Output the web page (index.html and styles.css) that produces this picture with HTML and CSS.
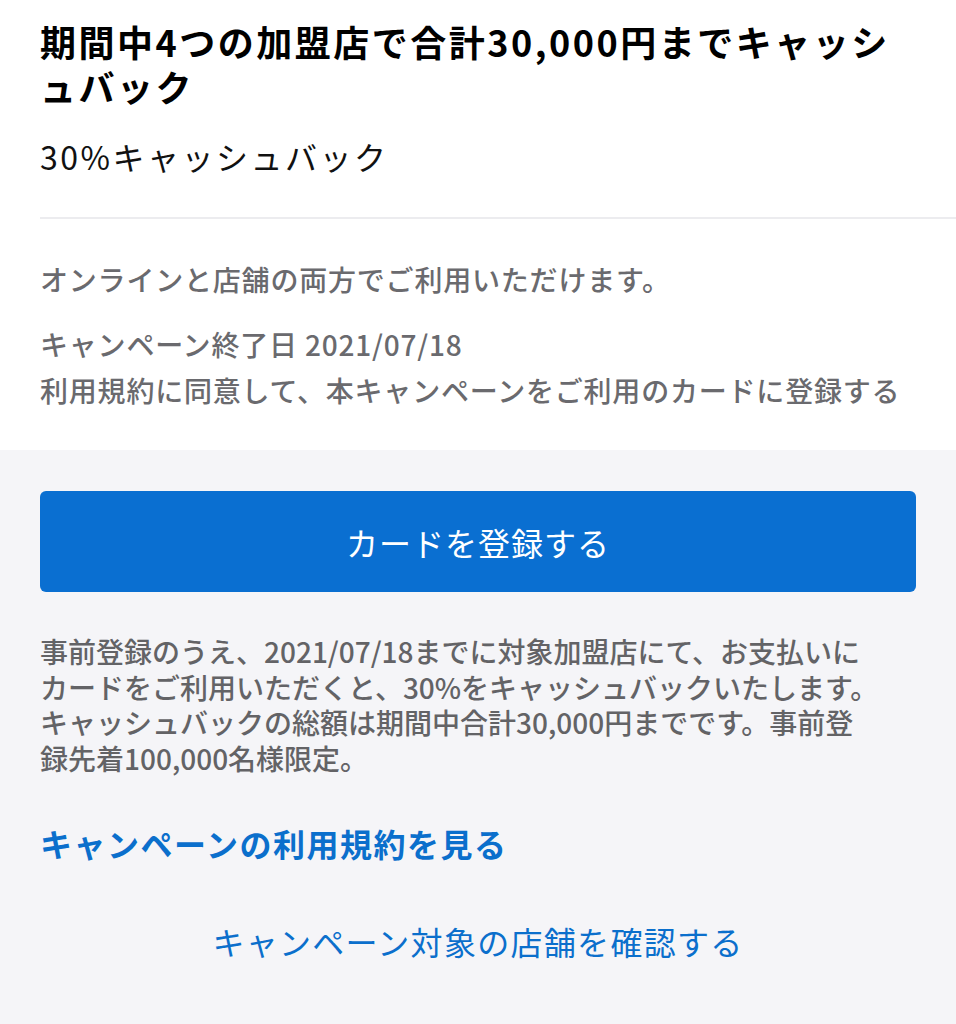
FILE: index.html
```html
<!DOCTYPE html>
<html lang="ja">
  <head>
    <meta charset="UTF-8" />
    <meta name="viewport" content="width=device-width, initial-scale=1.0" />
    <title>キャンペーン</title>
    <link rel="stylesheet" href="styles.css">
  </head>
  <body>
    <div class="summary">
      <h1 class="title">期間中4つの加盟店で合計30,000円までキャッシュバック</h1>
      <p class="rate">30%キャッシュバック</p>
      <div class="divider"></div>
      <p class="note">オンラインと店舗の両方でご利用いただけます。</p>
      <div class="terms-info">
        <p>キャンペーン終了日 2021/07/18</p>
        <p>利用規約に同意して、本キャンペーンをご利用のカードに登録する</p>
      </div>
    </div>
    <div class="action">
      <div class="register button">カードを登録する</div>
      <p class="description">事前登録のうえ、2021/07/18までに対象加盟店にて、お支払いに<br>カードをご利用いただくと、30%をキャッシュバックいたします。<br>キャッシュバックの総額は期間中合計30,000円までです。事前登<br>録先着100,000名様限定。</p>
      <a class="terms-link" href="#">キャンペーンの利用規約を見る</a>
      <a class="stores-link" href="#">キャンペーン対象の店舗を確認する</a>
    </div>
  </body>
</html>
```

FILE: styles.css
```css
body {
  margin: 0;
  font-family: "Noto Sans CJK JP", "Noto Sans", sans-serif;
  background-color: #fff;
}
p {
  margin: 0;
}
.summary {
  padding: 19px 0 37px 40px;
  background-color: #fff;
}
.title {
  margin: 0;
  padding-right: 40px;
  font-size: 36px;
  line-height: 45px;
  font-weight: 700;
  letter-spacing: 2.5px;
  color: #000;
}
.rate {
  margin-top: 25px;
  font-size: 32px;
  line-height: 44px;
  letter-spacing: 2.5px;
  color: #111;
}
.divider {
  height: 2px;
  margin-top: 39px;
  background-color: #ececef;
}
.note,
.terms-info {
  padding-right: 40px;
  font-size: 28px;
  font-weight: 500;
  letter-spacing: 0.8px;
  color: #6a6a6e;
}
.note {
  margin-top: 40px;
  line-height: 40px;
}
.terms-info {
  margin-top: 22px;
  line-height: 46px;
}
.action {
  padding: 41px 40px 62px;
  background-color: #f5f5f8;
}
.register.button {
  height: 101px;
  display: flex;
  justify-content: center;
  align-items: center;
  border-radius: 6px;
  background-color: #0a6fd1;
  font-size: 32px;
  letter-spacing: 1px;
  color: #fff;
  cursor: pointer;
}
.description {
  margin-top: 42px;
  font-size: 28px;
  line-height: 35.5px;
  font-weight: 500;
  letter-spacing: 0;
  white-space: nowrap;
  color: #636366;
}
.terms-link,
.stores-link {
  display: block;
  text-decoration: none;
  font-size: 32px;
  line-height: 44px;
  color: #0b6fcc;
}
.terms-link {
  margin-top: 45px;
  font-weight: 700;
  letter-spacing: 1.5px;
}
.stores-link {
  margin-top: 54px;
  text-align: center;
  letter-spacing: 1.3px;
}
```
